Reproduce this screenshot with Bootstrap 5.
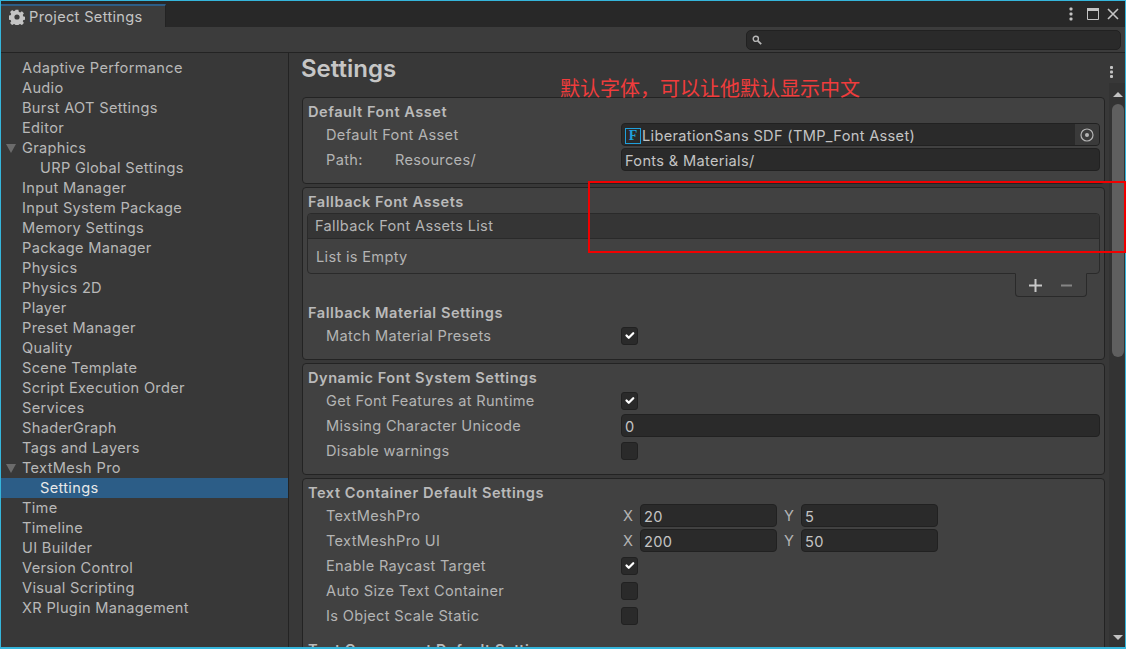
<!DOCTYPE html>
<html lang="en">
<head>
    <meta charset="UTF-8">
    <meta name="viewport" content="width=device-width, initial-scale=1.0">
    <title>Project Settings</title>
    <link href="https://cdn.jsdelivr.net/npm/bootstrap@5.3.2/dist/css/bootstrap.min.css" rel="stylesheet">
    <style>
        html, body { height: 100%; overflow: hidden; background: #383838; }
        body { font-family: Inter, "Noto Sans", sans-serif; font-size: 14.6px; letter-spacing: .32px; color: #bdbdbd; line-height: 20px; }
        .ed-win { height: 649px; border: 1px solid #35b6dc; border-bottom-width: 2px; }
        .ed-tabbar { height: 26px; background: #282828; padding-top: 3px; flex: none; }
        .ed-tab { width: 165px; background: #3c3c3c; border-top: 2px solid #2c5d87; border-right: 1px solid #232323; padding-left: 8px; color: #c4c4c4; }
        .ed-winbtns { padding-right: 6px; gap: 8px; margin-top: -3px; }
        .ed-winbtns .ed-dots { margin-right: 6px; }
        .ed-toolbar { height: 26px; background: #3c3c3c; border-bottom: 1px solid #232323; flex: none; justify-content: flex-end; padding: 3px 4px 0 0; }
        .ed-search { width: 375px; height: 20px; background: #2a2a2a; border: 1px solid #212121; border-radius: 5px; padding-left: 5px; }
        .ed-side { width: 288px; flex: none; background: #383838; border-right: 1px solid #232323; padding-top: 5px; }
        .ed-side .list-group-item { background: transparent; border: 0; margin: 0; padding: 0 0 0 21px; height: 20px; color: #b8b8b8; position: relative; }
        .ed-side .list-group-item.ed-sub { padding-left: 39px; }
        .ed-side .list-group-item.active { background: #2c5d87; color: #e8e8e8; width: 287px; margin-top: 0; border-top-width: 0; }
        .ed-side .ed-open::before { content: ""; position: absolute; left: 5px; top: 6px; border-style: solid; border-width: 9px 5px 0 5px; border-color: #6b6b6b transparent transparent transparent; }
        .ed-main { min-width: 0; padding-left: 12px; padding-right: 4px; overflow: hidden; }
        .ed-title { height: 44px; font-size: 24px; font-weight: 600; letter-spacing: 0; color: #c6c6c6; line-height: 31px; flex: none; }
        .ed-box { background: #414141; border: 1px solid #232323; border-radius: 4px; margin-bottom: 3px; padding: 4px 4px 11px 5px; flex: none; color: #b4b4b4; margin-left: 1px; }
        .ed-head { font-weight: 600; height: 20px; letter-spacing: .52px; color: #bababa; }
        .ed-row { height: 25px; padding-left: 18px; align-items: center; }
        .ed-label { width: 295px; flex: none; }
        .ed-path { width: 69px; }
        .ed-field { height: 23px; background: #2a2a2a; border: 1px solid #212121; border-radius: 4px; padding: 2px 3px 0; color: #c4c4c4; line-height: 20px; overflow: hidden; }
        .ed-num { width: 137px; flex: none; }
        .ed-axis { width: 19px; flex: none; padding-left: 2px; }
        .ed-axis2 { width: 24px; flex: none; padding-left: 7px; }
        .ed-box .form-check-input { width: 17px; height: 18px; margin: 0; background-color: #2a2a2a; border: 1px solid #212121; border-radius: 3px; background-size: 15px; }
        .ed-list { background: #414141; border: 1px solid #2a2a2a; border-radius: 4px; height: 61px; margin-top: 1px; margin-left: -1px; }
        .ed-listhead { height: 25px; background: #353535; border-bottom: 1px solid #2a2a2a; padding-left: 7px; line-height: 24px; border-radius: 4px 4px 0 0; }
        .ed-listbody { padding: 8px 0 0 8px; }
        .ed-foot { width: 72px; height: 24px; margin: -1px 13px 0 auto; padding-right: 2px; background: #414141; border: 1px solid #2a2a2a; border-top-color: #414141; border-radius: 0 0 4px 4px; gap: 19px; position: relative; }
        .ed-subhead { margin-top: 6px; }
        .ed-scroll { width: 16px; flex: none; }
        .ed-kebabwrap { height: 30px; padding: 13px 0 0 1px; flex: none; background: #383838; }
        .ed-track { background: #333; position: relative; padding: 21px 1px 0 3px; }
        .ed-thumb { height: 253px; background: #5f5f5f; border-radius: 6px; }
        .ed-arrow-up { position: absolute; left: 4px; top: 9px; border-style: solid; border-width: 0 5px 5px 5px; border-color: transparent transparent #c2c2c2 transparent; }
        .ed-arrow-dn { position: absolute; left: 4px; top: 552px; border-style: solid; border-width: 5px 5px 0 5px; border-color: #c2c2c2 transparent transparent transparent; }
        .ed-note { position: absolute; left: 559px; top: 76px; font-family: "Noto Sans CJK SC", sans-serif; font-size: 20px; line-height: 22px; letter-spacing: 0; color: #f03c3c; white-space: nowrap; }
        .ed-redbox { position: absolute; left: 587px; top: 180px; width: 538px; height: 72px; border: 2px solid #f00000; pointer-events: none; }
        .ed-f { width: 16px; height: 16px; flex: none; border: 1px solid #1fa0dc; color: #1fa0dc; font-family: "Liberation Serif", serif; font-weight: 700; font-size: 14px; line-height: 14px; letter-spacing: 0; text-align: center; margin-right: 1px; }
        .ed-pick { width: 24px; height: 21px; background: #3a3a3a; margin: -2px -3px 0 auto; flex: none; }
    </style>
</head>
<body>
<div class="ed-win d-flex flex-column position-relative">

    <div class="ed-tabbar d-flex justify-content-between">
        <div class="ed-tab d-flex align-items-center gap-1">
            <svg width="16" height="16" viewBox="0 0 16 16"><path fill="#c4c4c4" fill-rule="evenodd" d="M6.6.8h2.8l.4 2 1.3.6 1.8-1.1 2 2-1.1 1.8.6 1.3 2 .4v2.8l-2 .4-.6 1.3 1.1 1.8-2 2-1.8-1.1-1.3.6-.4 2H6.6l-.4-2-1.3-.6-1.8 1.1-2-2 1.1-1.8-.6-1.3-2-.4V6.6l2-.4.6-1.3L1.1 3.1l2-2 1.8 1.1 1.3-.6zM8 5.4a2.6 2.6 0 1 0 0 5.2 2.6 2.6 0 0 0 0-5.2z"/></svg>
            <span>Project Settings</span>
        </div>
        <div class="ed-winbtns d-flex align-items-center">
            <svg class="ed-dots" width="4" height="14" viewBox="0 0 4 14"><g fill="#c4c4c4"><rect x="0.5" y="0.5" width="3" height="3" rx="1"/><rect x="0.5" y="5.5" width="3" height="3" rx="1"/><rect x="0.5" y="10.5" width="3" height="3" rx="1"/></g></svg>
            <svg width="12" height="12" viewBox="0 0 12 12"><path fill="none" stroke="#c4c4c4" d="M.5 2.5h11v9H.5z"/><rect width="12" height="3" fill="#c4c4c4"/></svg>
            <svg width="12" height="12" viewBox="0 0 12 12"><path fill="none" stroke="#c4c4c4" stroke-width="1.6" d="M1 1l10 10M11 1L1 11"/></svg>
        </div>
    </div>

    <div class="ed-toolbar d-flex">
        <div class="ed-search d-flex align-items-center">
            <svg width="10" height="10" viewBox="0 0 10 10"><circle cx="3.8" cy="3.8" r="2.6" fill="none" stroke="#b8b8b8" stroke-width="1.4"/><path stroke="#b8b8b8" stroke-width="1.8" d="M5.8 5.8L9.2 9.2"/></svg>
        </div>
    </div>

    <div class="d-flex flex-grow-1 overflow-hidden">
        <div class="ed-side list-group list-group-flush rounded-0">
            <div class="list-group-item">Adaptive Performance</div>
            <div class="list-group-item">Audio</div>
            <div class="list-group-item">Burst AOT Settings</div>
            <div class="list-group-item">Editor</div>
            <div class="list-group-item ed-open">Graphics</div>
            <div class="list-group-item ed-sub">URP Global Settings</div>
            <div class="list-group-item">Input Manager</div>
            <div class="list-group-item">Input System Package</div>
            <div class="list-group-item">Memory Settings</div>
            <div class="list-group-item">Package Manager</div>
            <div class="list-group-item">Physics</div>
            <div class="list-group-item">Physics 2D</div>
            <div class="list-group-item">Player</div>
            <div class="list-group-item">Preset Manager</div>
            <div class="list-group-item">Quality</div>
            <div class="list-group-item">Scene Template</div>
            <div class="list-group-item">Script Execution Order</div>
            <div class="list-group-item">Services</div>
            <div class="list-group-item">ShaderGraph</div>
            <div class="list-group-item">Tags and Layers</div>
            <div class="list-group-item ed-open">TextMesh Pro</div>
            <div class="list-group-item ed-sub active">Settings</div>
            <div class="list-group-item">Time</div>
            <div class="list-group-item">Timeline</div>
            <div class="list-group-item">UI Builder</div>
            <div class="list-group-item">Version Control</div>
            <div class="list-group-item">Visual Scripting</div>
            <div class="list-group-item">XR Plugin Management</div>
        </div>

        <div class="ed-main flex-grow-1 d-flex flex-column">
            <div class="ed-title">Settings</div>

            <div class="ed-box">
                <div class="ed-head">Default Font Asset</div>
                <div class="ed-row d-flex">
                    <div class="ed-label">Default Font Asset</div>
                    <div class="ed-field flex-grow-1 d-flex align-items-center">
                        <span class="ed-f">F</span><span>LiberationSans SDF (TMP_Font Asset)</span>
                        <span class="ed-pick d-flex align-items-center justify-content-center">
                            <svg width="14" height="14" viewBox="0 0 14 14"><circle cx="7" cy="7" r="6" fill="none" stroke="#b4b4b4" stroke-width="1.2"/><circle cx="7" cy="7" r="2" fill="#b4b4b4"/></svg>
                        </span>
                    </div>
                </div>
                <div class="ed-row d-flex">
                    <div class="ed-label d-flex"><span class="ed-path">Path:</span><span>Resources/</span></div>
                    <div class="ed-field flex-grow-1">Fonts &amp; Materials/</div>
                </div>
            </div>

            <div class="ed-box">
                <div class="ed-head">Fallback Font Assets</div>
                <div class="ed-list">
                    <div class="ed-listhead">Fallback Font Assets List</div>
                    <div class="ed-listbody">List is Empty</div>
                </div>
                <div class="ed-foot d-flex align-items-center justify-content-center">
                    <svg width="13" height="13" viewBox="0 0 13 13"><path fill="#c8c8c8" d="M5.5 0h2v5.5H13v2H7.5V13h-2V7.5H0v-2h5.5z"/></svg>
                    <svg width="11" height="13" viewBox="0 0 11 13"><rect y="5.5" width="11" height="2" fill="#858585"/></svg>
                </div>
                <div class="ed-head ed-subhead">Fallback Material Settings</div>
                <div class="ed-row d-flex">
                    <div class="ed-label">Match Material Presets</div>
                    <input class="form-check-input" type="checkbox" checked>
                </div>
            </div>

            <div class="ed-box">
                <div class="ed-head">Dynamic Font System Settings</div>
                <div class="ed-row d-flex">
                    <div class="ed-label">Get Font Features at Runtime</div>
                    <input class="form-check-input" type="checkbox" checked>
                </div>
                <div class="ed-row d-flex">
                    <div class="ed-label">Missing Character Unicode</div>
                    <div class="ed-field flex-grow-1">0</div>
                </div>
                <div class="ed-row d-flex">
                    <div class="ed-label">Disable warnings</div>
                    <input class="form-check-input" type="checkbox">
                </div>
            </div>

            <div class="ed-box">
                <div class="ed-head">Text Container Default Settings</div>
                <div class="ed-row d-flex">
                    <div class="ed-label">TextMeshPro</div>
                    <div class="ed-axis">X</div><div class="ed-field ed-num">20</div>
                    <div class="ed-axis2">Y</div><div class="ed-field ed-num">5</div>
                </div>
                <div class="ed-row d-flex">
                    <div class="ed-label">TextMeshPro UI</div>
                    <div class="ed-axis">X</div><div class="ed-field ed-num">200</div>
                    <div class="ed-axis2">Y</div><div class="ed-field ed-num">50</div>
                </div>
                <div class="ed-row d-flex">
                    <div class="ed-label">Enable Raycast Target</div>
                    <input class="form-check-input" type="checkbox" checked>
                </div>
                <div class="ed-row d-flex">
                    <div class="ed-label">Auto Size Text Container</div>
                    <input class="form-check-input" type="checkbox">
                </div>
                <div class="ed-row d-flex">
                    <div class="ed-label">Is Object Scale Static</div>
                    <input class="form-check-input" type="checkbox">
                </div>
                <div class="ed-head mt-2 pt-1">Text Component Default Settings</div>
            </div>
        </div>

        <div class="ed-scroll d-flex flex-column">
            <div class="ed-kebabwrap">
                <svg class="d-block" width="4" height="12" viewBox="0 0 4 12"><g fill="#c4c4c4"><rect x="0" y="0" width="3" height="3" rx="1"/><rect x="0" y="4.5" width="3" height="3" rx="1"/><rect x="0" y="9" width="3" height="3" rx="1"/></g></svg>
            </div>
            <div class="ed-track flex-grow-1">
                <div class="ed-arrow-up"></div>
                <div class="ed-thumb"></div>
                <div class="ed-arrow-dn"></div>
            </div>
        </div>
    </div>

    <div class="ed-note">默认字体，可以让他默认显示中文</div>
    <div class="ed-redbox"></div>
</div>
<script src="https://cdn.jsdelivr.net/npm/bootstrap@5.3.2/dist/js/bootstrap.bundle.min.js"></script>
</body>
</html>
